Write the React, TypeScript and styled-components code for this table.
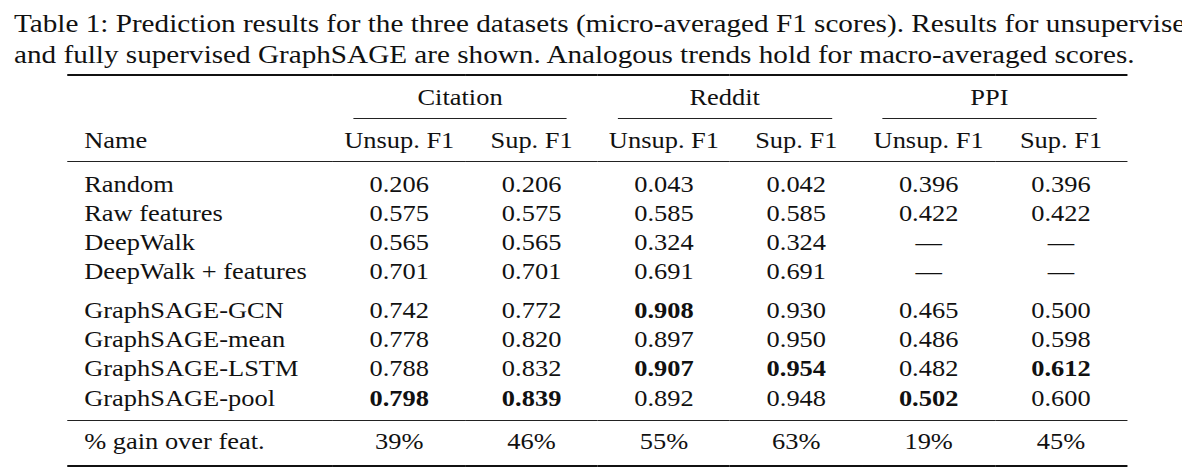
import styled, { createGlobalStyle, css } from 'styled-components';

const GlobalStyle = createGlobalStyle`
    html, body {
        margin: 0;
        padding: 0;
        background: #ffffff;
        overflow: hidden;
    }
    body {
        font-family: "Liberation Serif", "Times New Roman", serif;
        color: #111111;
    }
`;

// the screenshot is stretched sideways (about 1.14x), so the sheet is laid out
// narrow and widened as a whole
const STRETCH = 1.14;

type Cell = { v: string; b?: boolean };

const groups = ['Citation', 'Reddit', 'PPI'];

const baselines: [string, Cell[]][] = [
    ['Random', [{ v: '0.206' }, { v: '0.206' }, { v: '0.043' }, { v: '0.042' }, { v: '0.396' }, { v: '0.396' }]],
    ['Raw features', [{ v: '0.575' }, { v: '0.575' }, { v: '0.585' }, { v: '0.585' }, { v: '0.422' }, { v: '0.422' }]],
    ['DeepWalk', [{ v: '0.565' }, { v: '0.565' }, { v: '0.324' }, { v: '0.324' }, { v: '—' }, { v: '—' }]],
    ['DeepWalk + features', [{ v: '0.701' }, { v: '0.701' }, { v: '0.691' }, { v: '0.691' }, { v: '—' }, { v: '—' }]],
];

const sage: [string, Cell[]][] = [
    ['GraphSAGE-GCN', [{ v: '0.742' }, { v: '0.772' }, { v: '0.908', b: true }, { v: '0.930' }, { v: '0.465' }, { v: '0.500' }]],
    ['GraphSAGE-mean', [{ v: '0.778' }, { v: '0.820' }, { v: '0.897' }, { v: '0.950' }, { v: '0.486' }, { v: '0.598' }]],
    ['GraphSAGE-LSTM', [{ v: '0.788' }, { v: '0.832' }, { v: '0.907', b: true }, { v: '0.954', b: true }, { v: '0.482' }, { v: '0.612', b: true }]],
    ['GraphSAGE-pool', [{ v: '0.798', b: true }, { v: '0.839', b: true }, { v: '0.892' }, { v: '0.948' }, { v: '0.502', b: true }, { v: '0.600' }]],
];

const gains = ['39%', '46%', '55%', '63%', '19%', '45%'];

const App = () => {
    return (
        <Page>
            <GlobalStyle />
            <Sheet>
                <Caption>
                    Table 1: Prediction results for the three datasets (micro-averaged F1 scores). Results for unsupervised
                    <br />
                    and fully supervised GraphSAGE are shown. Analogous trends hold for macro-averaged scores.
                </Caption>
                <Table>
                    <colgroup>
                        <NameCol />
                        {Array.from({ length: 6 }).map((_, i) => (
                            <ValueCol key={i} />
                        ))}
                    </colgroup>
                    <thead>
                        <GroupRow>
                            <th />
                            {groups.map((g) => (
                                <GroupHead key={g} colSpan={2}>
                                    <CmidRule>{g}</CmidRule>
                                </GroupHead>
                            ))}
                        </GroupRow>
                        <HeadRow>
                            <NameHead>Name</NameHead>
                            {groups.map((g) => [
                                <ColHead key={g + 'u'}>Unsup. F1</ColHead>,
                                <ColHead key={g + 's'}>Sup. F1</ColHead>,
                            ])}
                        </HeadRow>
                    </thead>
                    <tbody>
                        {baselines.map(([name, cells], i) => (
                            <DataRow key={name} $first={i === 0}>
                                <NameCell>{name}</NameCell>
                                {cells.map((c, j) => (
                                    <ValueCell key={j} $bold={c.b}>
                                        {c.v}
                                    </ValueCell>
                                ))}
                            </DataRow>
                        ))}
                        {sage.map(([name, cells], i) => (
                            <DataRow key={name} $groupStart={i === 0} $last={i === sage.length - 1}>
                                <NameCell>{name}</NameCell>
                                {cells.map((c, j) => (
                                    <ValueCell key={j} $bold={c.b}>
                                        {c.v}
                                    </ValueCell>
                                ))}
                            </DataRow>
                        ))}
                    </tbody>
                    <tfoot>
                        <GainRow>
                            <NameCell>% gain over feat.</NameCell>
                            {gains.map((g, j) => (
                                <ValueCell key={j}>{g}</ValueCell>
                            ))}
                        </GainRow>
                    </tfoot>
                </Table>
            </Sheet>
        </Page>
    );
};

export default App;

const Page = styled.div`
    width: 1182px;
    height: 473px;
    overflow: hidden;
    background: #fff;
`;

const Sheet = styled.div`
    width: ${1182 / STRETCH}px;
    padding-top: 8px;
    transform: scaleX(${STRETCH});
    transform-origin: 0 0;
`;

const Caption = styled.div`
    padding-left: 12.3px;
    font-size: 25.6px;
    line-height: 31px;
    white-space: nowrap;
    color: #111;
`;

const Table = styled.table`
    margin: 4px 0 0 58.8px;
    width: 930px;
    table-layout: fixed;
    border-collapse: collapse;
    border-spacing: 0;
    font-size: 23.2px;
    color: #111;
    border-top: 2px solid #111;
    border-bottom: 2px solid #111;

    td,
    th {
        padding: 0;
        font-weight: normal;
    }
`;

const NameCol = styled.col`
    width: 233.4px;
`;

const ValueCol = styled.col`
    width: 116.1px;
`;

const GroupRow = styled.tr`
    line-height: 26px;
`;

const GroupHead = styled.th`
    padding-top: 8px !important;
    text-align: center;
`;

const CmidRule = styled.div`
    margin: 0 27px 0 17.5px;
    padding-bottom: 8px;
    border-bottom: 1px solid #222;
`;

const HeadRow = styled.tr`
    line-height: 26px;
    border-bottom: 1px solid #222;

    th {
        padding-top: 8px;
        padding-bottom: 8px;
    }
`;

const NameHead = styled.th`
    text-align: left;
    padding-left: 15px !important;
`;

const ColHead = styled.th`
    text-align: center;
`;

const DataRow = styled.tr<{ $first?: boolean; $groupStart?: boolean; $last?: boolean }>`
    line-height: 29.3px;

    ${(p) =>
        p.$first &&
        css`
            td {
                padding-top: 7.5px;
            }
        `}
    ${(p) =>
        p.$groupStart &&
        css`
            td {
                padding-top: 9px;
            }
        `}
    ${(p) =>
        p.$last &&
        css`
            border-bottom: 1px solid #222;
            td {
                padding-bottom: 7.5px;
            }
        `}
`;

const GainRow = styled.tr`
    line-height: 29.3px;

    td {
        padding-top: 6px;
        padding-bottom: 8px;
    }
`;

const NameCell = styled.td`
    text-align: left;
    padding-left: 15px !important;
    white-space: nowrap;
`;

const ValueCell = styled.td<{ $bold?: boolean }>`
    text-align: center;
    font-weight: ${(p) => (p.$bold ? 700 : 400)} !important;
`;
